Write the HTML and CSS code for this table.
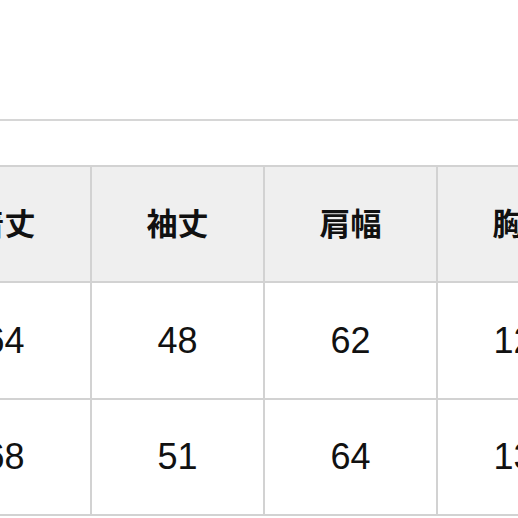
FILE: index.html
```html
<!DOCTYPE html>
<html lang="ja">
<head>
<meta charset="utf-8">
<link rel="stylesheet" href="styles.css">
</head>
<body>
<div class="page">
  <div class="divider"></div>
  <div class="size-table">
    <div class="cell head">着丈</div>
    <div class="cell head">袖丈</div>
    <div class="cell head">肩幅</div>
    <div class="cell head">胸囲</div>
    <div class="cell num">64</div>
    <div class="cell num">48</div>
    <div class="cell num">62</div>
    <div class="cell num">124</div>
    <div class="cell num">68</div>
    <div class="cell num">51</div>
    <div class="cell num">64</div>
    <div class="cell num">130</div>
  </div>
</div>
</body>
</html>
```
FILE: styles.css
```css
html, body {
  margin: 0;
  padding: 0;
  background: #ffffff;
}
.page {
  width: 518px;
  height: 518px;
  overflow: hidden;
  padding-top: 119px;
  box-sizing: border-box;
}
.divider {
  height: 2px;
  background: #d6d6d6;
}
.size-table {
  margin-top: 44px;
  margin-left: -83px;
  width: 694px;
  display: grid;
  grid-template-columns: repeat(4, 171px);
  grid-template-rows: 114px 115px 114px;
  gap: 2px;
  padding: 2px;
  background: #d2d2d2;
  box-sizing: border-box;
}
.cell {
  display: flex;
  align-items: center;
  justify-content: center;
  background: #ffffff;
  color: #111111;
}
.head {
  background: #efefef;
  font-family: "Noto Sans CJK JP", "Noto Sans CJK SC", sans-serif;
  font-weight: 700;
  font-size: 31px;
  padding-bottom: 6px;
  box-sizing: border-box;
}
.num {
  font-family: "Liberation Sans", Arial, sans-serif;
  font-size: 36px;
  font-weight: 400;
}
```
